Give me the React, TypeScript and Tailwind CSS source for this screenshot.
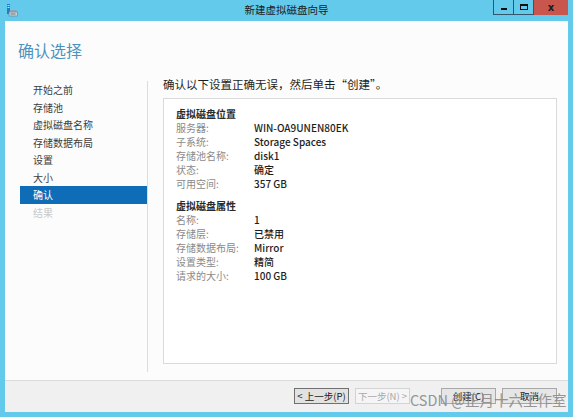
import React from "react";

const font = { fontFamily: '"Noto Sans CJK SC", "Noto Sans", sans-serif' };

const steps = ["开始之前", "存储池", "虚拟磁盘名称", "存储数据布局", "设置", "大小", "确认", "结果"];

const location: [string, string][] = [
  ["服务器:", "WIN-OA9UNEN80EK"],
  ["子系统:", "Storage Spaces"],
  ["存储池名称:", "disk1"],
  ["状态:", "确定"],
  ["可用空间:", "357 GB"],
];

const props: [string, string][] = [
  ["名称:", "1"],
  ["存储层:", "已禁用"],
  ["存储数据布局:", "Mirror"],
  ["设置类型:", "精简"],
  ["请求的大小:", "100 GB"],
];

function AppIcon() {
  return (
    <svg width="12" height="13" viewBox="0 0 12 13">
      <rect x="1" y="0" width="3" height="10" fill="#1d7fc4" />
      <rect x="1.5" y="1" width="2" height="1" fill="#bfe3f7" />
      <rect x="1.5" y="3" width="2" height="1" fill="#bfe3f7" />
      <path d="M3 8 L5 6 L10 6 L11.5 8 Z" fill="#9aa6ae" />
      <rect x="3" y="8" width="8.5" height="4" fill="#c8d0d6" stroke="#6d7b85" strokeWidth="0.6" />
      <rect x="4.5" y="9.5" width="5" height="1" fill="#6d7b85" />
    </svg>
  );
}

function Section({ title, rows }: { title: string; rows: [string, string][] }) {
  return (
    <div>
      <p className="h-[14px] text-[10px] leading-[14px] font-semibold text-[#2a2a2a]">{title}</p>
      {rows.map(([k, v]) => (
        <div key={k} className="flex h-[14px] text-[10px] leading-[14px]">
          <span className="w-[78px] text-[#8a8a8a]">{k}</span>
          <span className="text-[#1e1e1e] font-medium">{v}</span>
        </div>
      ))}
    </div>
  );
}

function Btn({ label, disabled, strong }: { label: string; disabled?: boolean; strong?: boolean }) {
  return (
    <div
      className={
        "flex h-[16px] w-[55px] items-center justify-center border text-[9.5px] " +
        (disabled
          ? "border-[#d3d3d3] bg-[#f5f5f5] text-[#a8a8a8]"
          : strong
          ? "border-[#707070] bg-[#e2e2e2] text-[#1a1a1a]"
          : "border-[#a8a8a8] bg-[#e6e6e6] text-[#1a1a1a]")
      }
    >
      {label}
    </div>
  );
}

export default function App() {
  return (
    <div className="relative flex h-[417px] w-[573px] flex-col bg-[#64caeb]" style={font}>
      {/* title bar */}
      <div className="relative flex h-[21px] items-start">
        <div className="ml-[6px] mt-[4px]">
          <AppIcon />
        </div>
        <p className="absolute left-0 right-0 top-[3px] text-center text-[10.5px] leading-[14px] text-[#1b1b1b]">新建虚拟磁盘向导</p>
        <div className="ml-auto mr-[5px] flex h-[15px]">
          <div className="flex w-[21px] items-end justify-center border border-t-0 border-[#34566a] pb-[4px]">
            <div className="h-[2px] w-[6px] bg-[#111]" />
          </div>
          <div className="flex w-[20px] items-center justify-center border border-l-0 border-t-0 border-[#34566a]">
            <div className="h-[6px] w-[8px] border border-t-2 border-[#111]" />
          </div>
          <div className="flex w-[34px] items-center justify-center bg-[#c9564c] text-[10px] font-bold leading-none text-[#1b1b1b]" style={{ fontFamily: '"DejaVu Sans", sans-serif' }}>
            x
          </div>
        </div>
      </div>

      {/* client */}
      <div className="mx-[5px] mb-[5px] flex flex-1 flex-col bg-[#fcfcfc]">
        <div className="flex flex-1 flex-col">
          <h1 className="pl-[13px] pt-[17px] text-[16px] leading-[24px] font-normal text-[#4b93be]">确认选择</h1>
          <div className="mt-[19px] flex flex-1">
            <div className="ml-[15px] w-[127px]">
              {steps.map((s) => (
                <div
                  key={s}
                  className={
                    "flex h-[17.5px] items-center pl-[13px] text-[10px] " +
                    (s === "确认" ? "bg-[#0f6cb6] text-white" : s === "结果" ? "text-[#c8c8c8]" : "text-[#3c3c3c]")
                  }
                >
                  {s}
                </div>
              ))}
            </div>
            <div className="mb-[8px] w-px bg-[#dcdcdc]" />
            <div className="flex flex-1 flex-col pl-[15px] pr-[11px]">
              <p className="-mt-[4px] text-[11.5px] leading-[14px] text-[#1e1e1e]">确认以下设置正确无误，然后单击“创建”。</p>
              <div className="mb-[16px] mt-[7px] flex flex-1 flex-col gap-[8px] border border-[#dadada] bg-white pl-[12px] pt-[8px]">
                <Section title="虚拟磁盘位置" rows={location} />
                <Section title="虚拟磁盘属性" rows={props} />
              </div>
            </div>
          </div>
        </div>
        <div className="flex h-[32px] gap-[6px] border-t border-[#dcdcdc] bg-[#f0f0f0] pl-[289px] pt-[7px]">
          <Btn label="< 上一步(P)" strong />
          <Btn label="下一步(N) >" disabled />
          <div className="w-[19px]" />
          <Btn label="创建(C)" />
          <Btn label="取消" />
        </div>
      </div>

      {/* watermark */}
      <p className="absolute left-[410px] top-[391px] text-[14.5px] leading-[18px] text-[#8c8c8c] opacity-90">CSDN @正月十六工作室</p>
    </div>
  );
}
